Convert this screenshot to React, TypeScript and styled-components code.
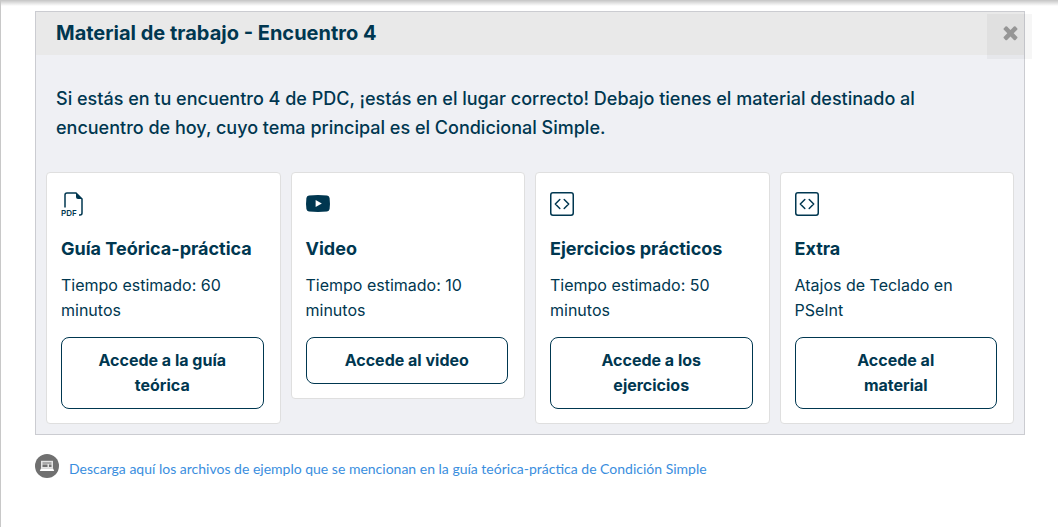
import React from 'react';
import styled, { createGlobalStyle } from 'styled-components';

const navy = '#003750';

const GlobalStyle = createGlobalStyle`
  *, *::before, *::after { box-sizing: border-box; }
  body {
    margin: 0;
    background: #fff;
    color: ${navy};
    font-family: Inter, "Liberation Sans", sans-serif;
  }
`;

const Page = styled.main`
  min-height: 100vh;
  padding: 11px 33px 24px 34px;
  border-left: 1px solid #c8c8c8;
  background: linear-gradient(#c4c4c4, #e2e2e2 3px, #fff 6px) top / 100% 6px no-repeat;
`;

const Panel = styled.section`
  position: relative;
  border: 1px solid #cbccd1;
  background: #eff0f4;
`;

const PanelTitle = styled.h1`
  margin: 0;
  padding: 6px 20px 7px;
  background: #e9e9e9;
  font-size: 20px;
  line-height: 30px;
  font-weight: 700;
`;

const CloseButton = styled.button`
  position: absolute;
  top: 2px;
  right: -8px;
  display: flex;
  align-items: center;
  justify-content: center;
  width: 45px;
  height: 45px;
  padding: 0 0 8px 2px;
  border: 0;
  background: rgba(0, 0, 0, 0.035);
  color: #969696;
  cursor: pointer;
`;

const Intro = styled.p`
  margin: 0;
  padding: 29px 80px 30px 20px;
  font-size: 18px;
  line-height: 29px;
  font-weight: 500;
`;

const Cards = styled.div`
  display: grid;
  grid-template-columns: repeat(4, minmax(0, 1fr));
  align-items: start;
  gap: 10px;
  padding: 0 10px 10px;
`;

const Card = styled.article`
  padding: 19px 16px 14px 14px;
  border: 1px solid #dfdfdf;
  border-radius: 4px;
  background: #fff;
`;

const CardIcon = styled.svg`
  display: block;
  width: 24px;
  height: 24px;
  overflow: visible;
`;

const CardTitle = styled.h2`
  margin: 20px 0 11px;
  font-size: 18px;
  line-height: 26px;
  font-weight: 700;
`;

const CardText = styled.p`
  margin: 0 0 14px;
  font-size: 16px;
  line-height: 25px;
`;

const CardButton = styled.button`
  display: block;
  width: 100%;
  padding: 10px 30px;
  border: 1px solid ${navy};
  border-radius: 8px;
  background: #fff;
  color: ${navy};
  font: 700 16px/25px Inter, "Liberation Sans", sans-serif;
  cursor: pointer;
`;

const Download = styled.div`
  display: flex;
  align-items: center;
  gap: 10px;
  margin-top: 18px;
`;

const DownloadLink = styled.a`
  padding-top: 6px;
  color: #3a8ede;
  font: 400 14px/20px Lato, "Open Sans", sans-serif;
  text-decoration: none;
`;

const PdfIcon = () => (
  <CardIcon viewBox="0 0 24 24" aria-hidden="true">
    <path d="M4 15.5V3Q4 1 6 1H15L21 7V21Q21 23 19 23H18" fill="none" stroke={navy} strokeWidth="1.5" />
    <path d="M15 1V5Q15 7 17 7H21.5Z" fill={navy} />
    <text x="0" y="23.5" fill={navy} fontFamily="Inter, sans-serif" fontSize="8" fontWeight="600">PDF</text>
  </CardIcon>
);

const VideoIcon = () => (
  <CardIcon viewBox="0 0 24 24" aria-hidden="true">
    <path d="M3 3.4Q12 2.6 21 3.4Q23.2 3.5 23.6 6Q24.3 11.5 23.6 17Q23.2 19.4 21 19.6Q12 20.4 3 19.6Q.8 19.4 .4 17Q-.3 11.5 .4 6Q.8 3.5 3 3.4Z" fill={navy} />
    <path d="M9.6 8V15L15.8 11.5Z" fill="#fff" />
  </CardIcon>
);

const CodeIcon = () => (
  <CardIcon viewBox="0 0 24 24" fill="none" stroke={navy} strokeWidth="1.5" aria-hidden="true">
    <rect x="0.75" y="0.75" width="22.5" height="22.5" rx="2.2" />
    <path d="M9.8 7.5L5.3 12L9.8 16.5M14.2 7.5L18.7 12L14.2 16.5" strokeLinecap="round" strokeLinejoin="round" />
  </CardIcon>
);

const materials = [
  { title: 'Guía Teórica-práctica', text: 'Tiempo estimado: 60 minutos', action: 'Accede a la guía teórica', Icon: PdfIcon },
  { title: 'Video', text: 'Tiempo estimado: 10 minutos', action: 'Accede al video', Icon: VideoIcon },
  { title: 'Ejercicios prácticos', text: 'Tiempo estimado: 50 minutos', action: 'Accede a los ejercicios', Icon: CodeIcon },
  { title: 'Extra', text: 'Atajos de Teclado en PSeInt', action: 'Accede al material', Icon: CodeIcon },
];

export default function App() {
  return (
    <>
      <GlobalStyle />
      <Page>
        <Panel>
          <PanelTitle>Material de trabajo - Encuentro 4</PanelTitle>
          <Intro>
            Si estás en tu encuentro 4 de PDC, ¡estás en el lugar correcto! Debajo tienes el material
            destinado al encuentro de hoy, cuyo tema principal es el Condicional Simple.
          </Intro>
          <Cards>
            {materials.map(({ title, text, action, Icon }) => (
              <Card key={title}>
                <Icon />
                <CardTitle>{title}</CardTitle>
                <CardText>{text}</CardText>
                <CardButton type="button">{action}</CardButton>
              </Card>
            ))}
          </Cards>
          <CloseButton type="button" aria-label="Cerrar">
            <svg width="21" height="21" viewBox="0 0 1792 1792" fill="currentColor" aria-hidden="true">
              <path d="M1490 1322q0 40-28 68l-136 136q-28 28-68 28t-68-28l-294-294-294 294q-28 28-68 28t-68-28l-136-136q-28-28-28-68t28-68l294-294-294-294q-28-28-28-68t28-68l136-136q28-28 68-28t68 28l294 294 294-294q28-28 68-28t68 28l136 136q28 28 28 68t-28 68l-294 294 294 294q28 28 28 68z" />
            </svg>
          </CloseButton>
        </Panel>
        <Download>
          <svg width="24" height="24" viewBox="0 0 24 24" aria-hidden="true">
            <circle cx="12" cy="12" r="12" fill="#707070" />
            <path d="M6 6.800H18V14H6Z" fill="#e4e4e4" />
            <path d="M7.500 8.500H16.500V9.500H7.500ZM7.500 10.500H12.500V13H7.500ZM14 10.500H16.500V13H14Z" fill="#707070" />
            <path d="M6 14.300H18L19.200 17H4.800Z" fill="#fff" />
          </svg>
          <DownloadLink href="#archivos">
            Descarga aquí los archivos de ejemplo que se mencionan en la guía teórica-práctica de Condición Simple
          </DownloadLink>
        </Download>
      </Page>
    </>
  );
}
